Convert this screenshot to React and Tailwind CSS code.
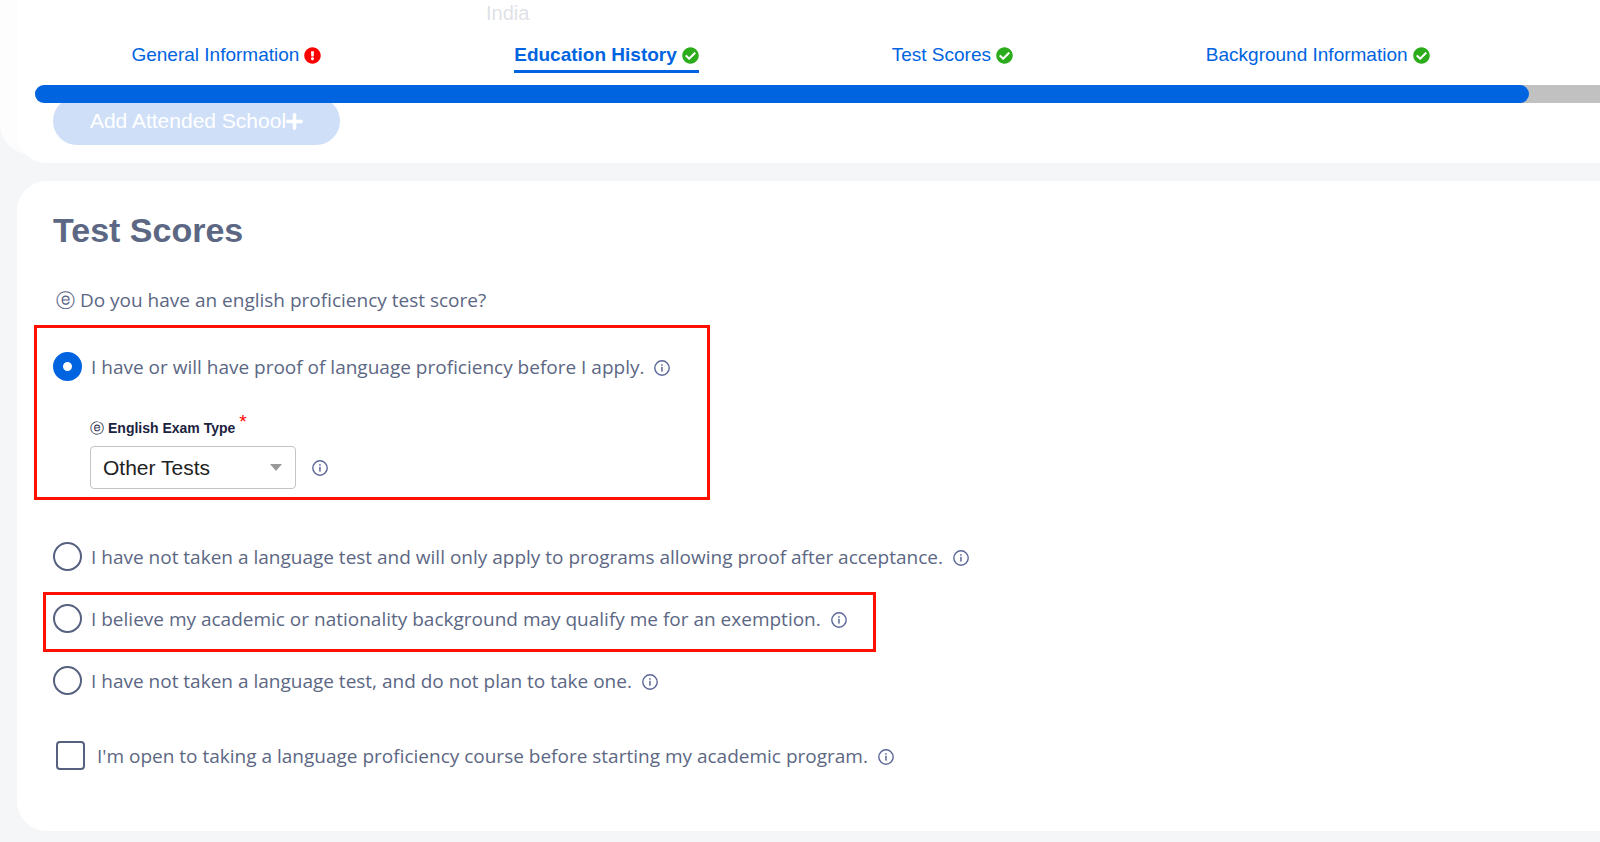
import React, { useState } from "react";
import { FaCheckCircle, FaExclamationCircle, FaPlus } from "react-icons/fa";

const TABS = [
  { id: "general", label: "General Information", ok: false },
  { id: "education", label: "Education History", ok: true },
  { id: "tests", label: "Test Scores", ok: true },
  { id: "background", label: "Background Information", ok: true },
];

function InfoIcon() {
  return (
    <svg viewBox="0 0 16 16" className="w-4 h-4 shrink-0" fill="none" aria-hidden="true">
      <circle cx="8" cy="8" r="7.2" stroke="#5c6797" strokeWidth="1.4" />
      <rect x="7.2" y="4.2" width="1.5" height="1.5" fill="#5c6797" />
      <rect x="7.2" y="6.8" width="1.5" height="4.8" fill="#5c6797" />
    </svg>
  );
}

// Circled "e" that marks fields about English
function EMark() {
  return <span className="font-['DejaVu_Sans',sans-serif] font-normal">ⓔ</span>;
}

function RadioRow({ value, selected, onSelect, children }) {
  return (
    <div className="flex items-center h-[29px]">
      <label className="flex items-center gap-[9px]">
        <input
          type="radio"
          name="proficiency"
          value={value}
          checked={selected === value}
          onChange={() => onSelect(value)}
          className="appearance-none shrink-0 w-[29px] h-[29px] rounded-full bg-white border-2 border-[#56617f] checked:border-[10px] checked:border-[#0064e1]"
        />
        <span>{children}</span>
      </label>
      <span className="pl-[10px] pt-[3px]"><InfoIcon /></span>
    </div>
  );
}

function ProgressHeader() {
  return (
    <header className="absolute top-0 inset-x-0 h-[154px] pl-[35px] bg-white/80 rounded-bl-[30px]">
      <nav className="flex justify-around mr-[74px] pt-[42px] h-[85px] text-[19px] leading-[26px] text-[#0064e1]">
        {TABS.map((tab) => (
          <a
            key={tab.id}
            href={`#${tab.id}`}
            className={`flex items-center gap-[5px] h-[31px] pb-[2px] border-b-3 ${
              tab.id === "education" ? "font-bold border-[#0064e1]" : "border-transparent"
            }`}
          >
            {tab.label}
            {tab.ok ? (
              <FaCheckCircle className="w-[17px] h-[17px] text-[#2bac1b]" />
            ) : (
              <FaExclamationCircle className="w-[17px] h-[17px] text-[#ff0000]" />
            )}
          </a>
        ))}
      </nav>
      <div className="h-[18px] bg-[#c1c1c1] rounded-l-full">
        <div className="h-full mr-[71px] bg-[#0064e1] rounded-full" />
      </div>
    </header>
  );
}

function App() {
  const [answer, setAnswer] = useState("proof");
  const [exam, setExam] = useState("other");
  const [course, setCourse] = useState(false);

  return (
    <div className="relative min-h-screen bg-[#f4f6f8] pl-[17px] pb-[11px] font-['Liberation_Sans',Arial,sans-serif]">
      <section id="education" className="bg-white rounded-bl-[30px] pl-9 pb-[18px]">
        <p className="pl-[433px] h-[97px] text-[20px] leading-[26px] text-[#606880]">India</p>
        <button
          type="button"
          className="flex items-center justify-center w-[287px] h-12 rounded-full bg-[#0f60dc] text-[21px] text-white"
        >
          Add Attended School
          <FaPlus className="w-[17px] h-[19px]" />
        </button>
      </section>

      <section
        id="tests"
        className="mt-[18px] bg-white rounded-l-[30px] pl-9 pt-[29px] pb-[61px] font-['Open_Sans',sans-serif] text-[19px] leading-7 text-[#5c6784]"
      >
        <h2 className="font-['Liberation_Sans',Arial,sans-serif] font-bold text-[34px] leading-10">Test Scores</h2>
        <p className="mt-9 h-7 pl-[3px]">
          <EMark /> Do you have an english proficiency test score?
        </p>

        <div className="mt-[11px] -ml-[19px] pl-4 pt-6 pb-2 w-[676px] max-w-full border-3 border-[#ff1000]">
          <RadioRow value="proof" selected={answer} onSelect={setAnswer}>
            I have or will have proof of language proficiency before I apply.
          </RadioRow>
          <div className="mt-[37px] pl-[37px] font-['Liberation_Sans',Arial,sans-serif]">
            <label htmlFor="exam-type" className="flex gap-1 h-5 text-[14px] leading-5 font-bold text-[#1b2340]">
              <EMark />
              English Exam Type
              <span className="-mt-[6px] font-normal text-[19px] text-[#ff0000]">*</span>
            </label>
            <div className="mt-2 flex items-center gap-4">
              <div className="relative w-[206px]">
                <select
                  id="exam-type"
                  value={exam}
                  onChange={(e) => setExam(e.target.value)}
                  className="appearance-none block w-full h-[43px] pl-3 rounded border border-[#c4c4c4] bg-white text-[21px] text-[#222222]"
                >
                  <option value="other">Other Tests</option>
                  <option value="ielts">IELTS</option>
                  <option value="toefl">TOEFL</option>
                </select>
                <svg viewBox="0 0 12 7" className="absolute right-[14px] top-[18px] w-3 h-[7px] pointer-events-none" aria-hidden="true">
                  <path d="M0 0h12L6 7z" fill="#999999" />
                </svg>
              </div>
              <InfoIcon />
            </div>
          </div>
        </div>

        <div className="mt-[42px]">
          <RadioRow value="after" selected={answer} onSelect={setAnswer}>
            I have not taken a language test and will only apply to programs allowing proof after acceptance.
          </RadioRow>
        </div>
        <div className="mt-[21px] -ml-[10px] pl-[7px] pt-[9px] pb-4 w-[833px] max-w-full border-3 border-[#ff1000]">
          <RadioRow value="exempt" selected={answer} onSelect={setAnswer}>
            I believe my academic or nationality background may qualify me for an exemption.
          </RadioRow>
        </div>
        <div className="mt-[14px]">
          <RadioRow value="none" selected={answer} onSelect={setAnswer}>
            I have not taken a language test, and do not plan to take one.
          </RadioRow>
        </div>

        <div className="mt-[46px] pl-[3px] h-[29px] flex items-center">
          <label className="flex items-center gap-3">
            <input
              type="checkbox"
              checked={course}
              onChange={(e) => setCourse(e.target.checked)}
              className="appearance-none shrink-0 w-[29px] h-[29px] rounded border-2 border-[#56617f] bg-white checked:bg-[#0064e1]"
            />
            <span>I'm open to taking a language proficiency course before starting my academic program.</span>
          </label>
          <span className="pl-[10px] pt-[3px]"><InfoIcon /></span>
        </div>
      </section>

      <ProgressHeader />
    </div>
  );
}

export default App;
